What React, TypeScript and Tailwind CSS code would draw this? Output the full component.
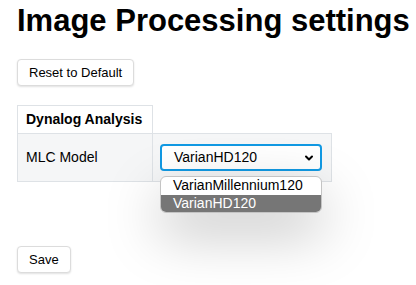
import { ChevronDown } from 'lucide-react';

const options = ['VarianMillennium120', 'VarianHD120'];

export default function App() {
  const selected = 'VarianHD120';

  return (
    <div className="min-h-[285px] bg-white pl-[17px] pt-[2px] font-['Liberation_Sans',Arial,sans-serif] text-black">
      <h1 className="whitespace-nowrap text-[31px] font-bold leading-[38px]">Image Processing settings</h1>

      <div className="mt-[19px]">
        <button className="h-[27px] rounded-[4px] border border-[#dcdcdc] bg-white px-[11px] text-[13px] shadow-[0_1px_2px_rgba(0,0,0,0.12)]">
          Reset to Default
        </button>
      </div>

      <table className="mt-[19px] border-collapse text-[14px]">
        <thead>
          <tr>
            <th className="h-[28px] w-[135px] border border-[#dee2e6] px-[8px] text-left font-bold">Dynalog Analysis</th>
            <th className="w-[179px]"></th>
          </tr>
        </thead>
        <tbody>
          <tr className="bg-[#f5f6f7]">
            <td className="h-[48px] border border-[#dee2e6] px-[8px]">MLC Model</td>
            <td className="border border-[#dee2e6] px-[7px]">
              <div className="relative w-[162px]">
                <div className="flex h-[27px] items-center justify-between rounded-[4px] border-2 border-[#1199e3] bg-white pl-[12px] pr-[5px]">
                  <span>{selected}</span>
                  <ChevronDown className="h-[12px] w-[12px]" strokeWidth={4} />
                </div>
                <div className="absolute left-0 top-[32px] z-10 w-[162px] overflow-hidden rounded-[6px] border border-[#c4c4c4] bg-white shadow-[0_20px_55px_rgba(0,0,0,0.25)]">
                  {options.map((o) => (
                    <div
                      key={o}
                      className={`h-[17.5px] pl-[12px] leading-[17px] ${o === selected ? 'bg-[#767676] text-white' : 'text-black'}`}
                    >
                      {o}
                    </div>
                  ))}
                </div>
              </div>
            </td>
          </tr>
        </tbody>
      </table>

      <div className="mt-[64px]">
        <button className="h-[27px] rounded-[4px] border border-[#dcdcdc] bg-white px-[11px] text-[13px] shadow-[0_1px_2px_rgba(0,0,0,0.12)]">
          Save
        </button>
      </div>
    </div>
  );
}
